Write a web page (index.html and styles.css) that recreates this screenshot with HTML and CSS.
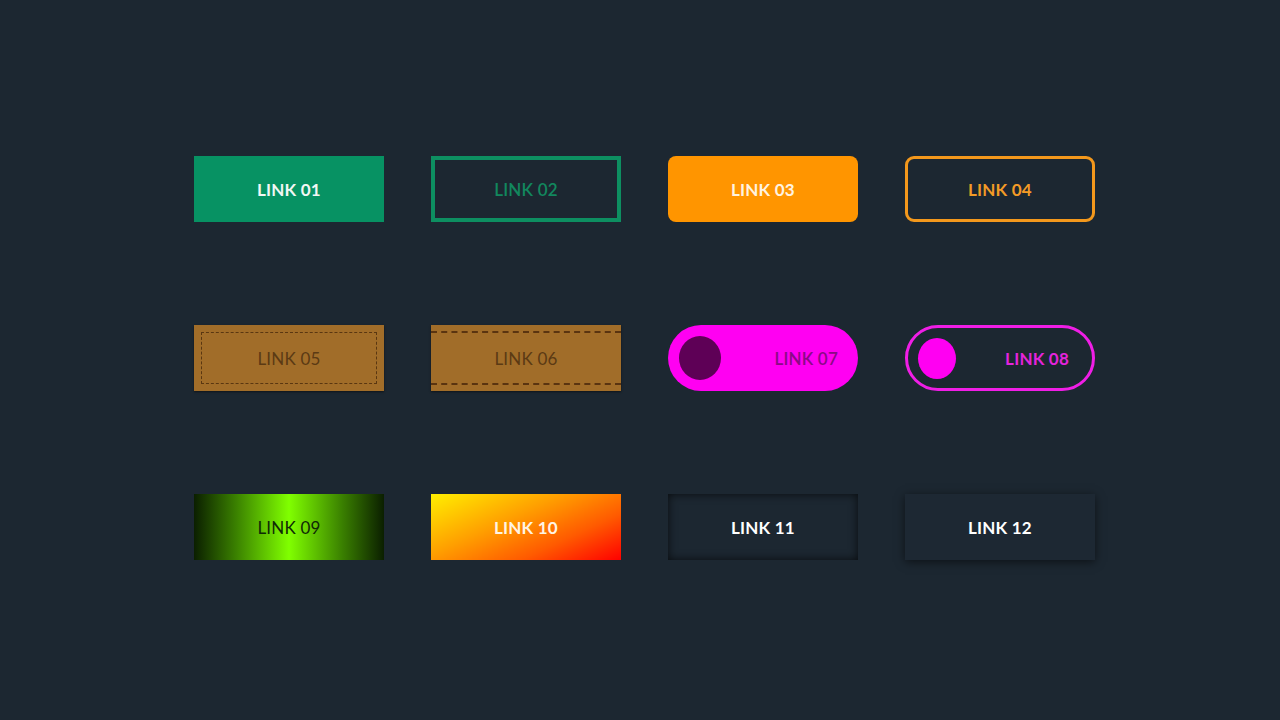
FILE: index.html
```html
<!DOCTYPE html>
<html>
<head>
<meta charset="utf-8">
<link rel="stylesheet" href="styles.css">
</head>
<body>
<div class="grid">
  <a class="btn b1">LINK 01</a>
  <a class="btn b2">LINK 02</a>
  <a class="btn b3">LINK 03</a>
  <a class="btn b4">LINK 04</a>
  <a class="btn b5"><span class="inner">LINK 05</span></a>
  <a class="btn b6">LINK 06</a>
  <a class="btn pill b7"><span class="dot"></span><span class="lbl">LINK 07</span></a>
  <a class="btn pill b8"><span class="dot"></span><span class="lbl">LINK 08</span></a>
  <a class="btn b9">LINK 09</a>
  <a class="btn b10">LINK 10</a>
  <a class="btn b11">LINK 11</a>
  <a class="btn b12">LINK 12</a>
</div>
</body>
</html>
```
FILE: styles.css
```css
html, body {
  margin: 0;
  padding: 0;
  background: #1c2731;
  width: 1280px;
  height: 720px;
  overflow: hidden;
}
.grid {
  display: grid;
  grid-template-columns: repeat(4, 190px);
  grid-auto-rows: 66px;
  column-gap: 47px;
  row-gap: 103px;
  padding: 156px 0 0 194px;
}
.btn {
  box-sizing: border-box;
  display: flex;
  align-items: center;
  justify-content: center;
  font-family: "Lato", "Open Sans", sans-serif;
  font-weight: 700;
  font-size: 17px;
  letter-spacing: 0.2px;
  text-decoration: none;
  color: #fff;
}
.b1 { background: #079263; color: #f2f7f4; }
.b2 { border: 4px solid #0d8f61; color: #12885e; font-weight: 600; }
.b3 { background: #ff9500; border-radius: 8px; color: #fff3e0; }
.b4 { border: 3px solid #f3981c; border-radius: 9px; color: #f39b26; }
.b5 {
  background: #a16d29;
  padding: 7px;
  box-shadow: 0 1px 2px rgba(0,0,0,0.5);
}
.b5 .inner {
  box-sizing: border-box;
  width: 100%;
  height: 100%;
  border: 1px dashed #5a3711;
  display: flex;
  align-items: center;
  justify-content: center;
  color: #5b3a14;
  font-weight: 400;
}
.b6 {
  background: #a16d29;
  color: #5b3a14;
  font-weight: 400;
  position: relative;
  box-shadow: 0 1px 2px rgba(0,0,0,0.5);
}
.b6::before, .b6::after {
  content: "";
  position: absolute;
  left: 0;
  right: 0;
  border-top: 2px dashed #5a3410;
}
.b6::before { top: 6px; }
.b6::after { bottom: 6px; }
.pill {
  border-radius: 33px;
  justify-content: space-between;
}
.b7 {
  background: #ff00f2;
  padding: 0 20px 0 11px;
}
.b7 .dot {
  width: 42px;
  height: 44px;
  border-radius: 50%;
  background: #5e0056;
}
.b7 .lbl { color: #8a0a86; font-weight: 600; }
.b8 {
  border: 3px solid #f01ee6;
  padding: 0 23px 0 10px;
}
.b8 .dot {
  width: 38px;
  height: 41px;
  border-radius: 50%;
  background: #ff00f2;
}
.b8 .lbl { color: #e424dc; }
.b9 {
  background: linear-gradient(90deg, #0b1f00 0%, #3a8000 22%, #80ff00 50%, #3a8000 78%, #0b1f00 100%);
  color: #0f2a06;
  font-weight: 400;
}
.b10 {
  background: linear-gradient(155deg, #ffef00 0%, #ff9e00 40%, #ff5a00 70%, #ff0000 100%);
  color: #fff4e4;
}
.b11 {
  background: #1c2731;
  box-shadow: inset 0 0 10px rgba(0,0,0,0.7);
}
.b12 {
  background: #1d2833;
  box-shadow: 0 2px 9px rgba(0,0,0,0.55);
}
```
